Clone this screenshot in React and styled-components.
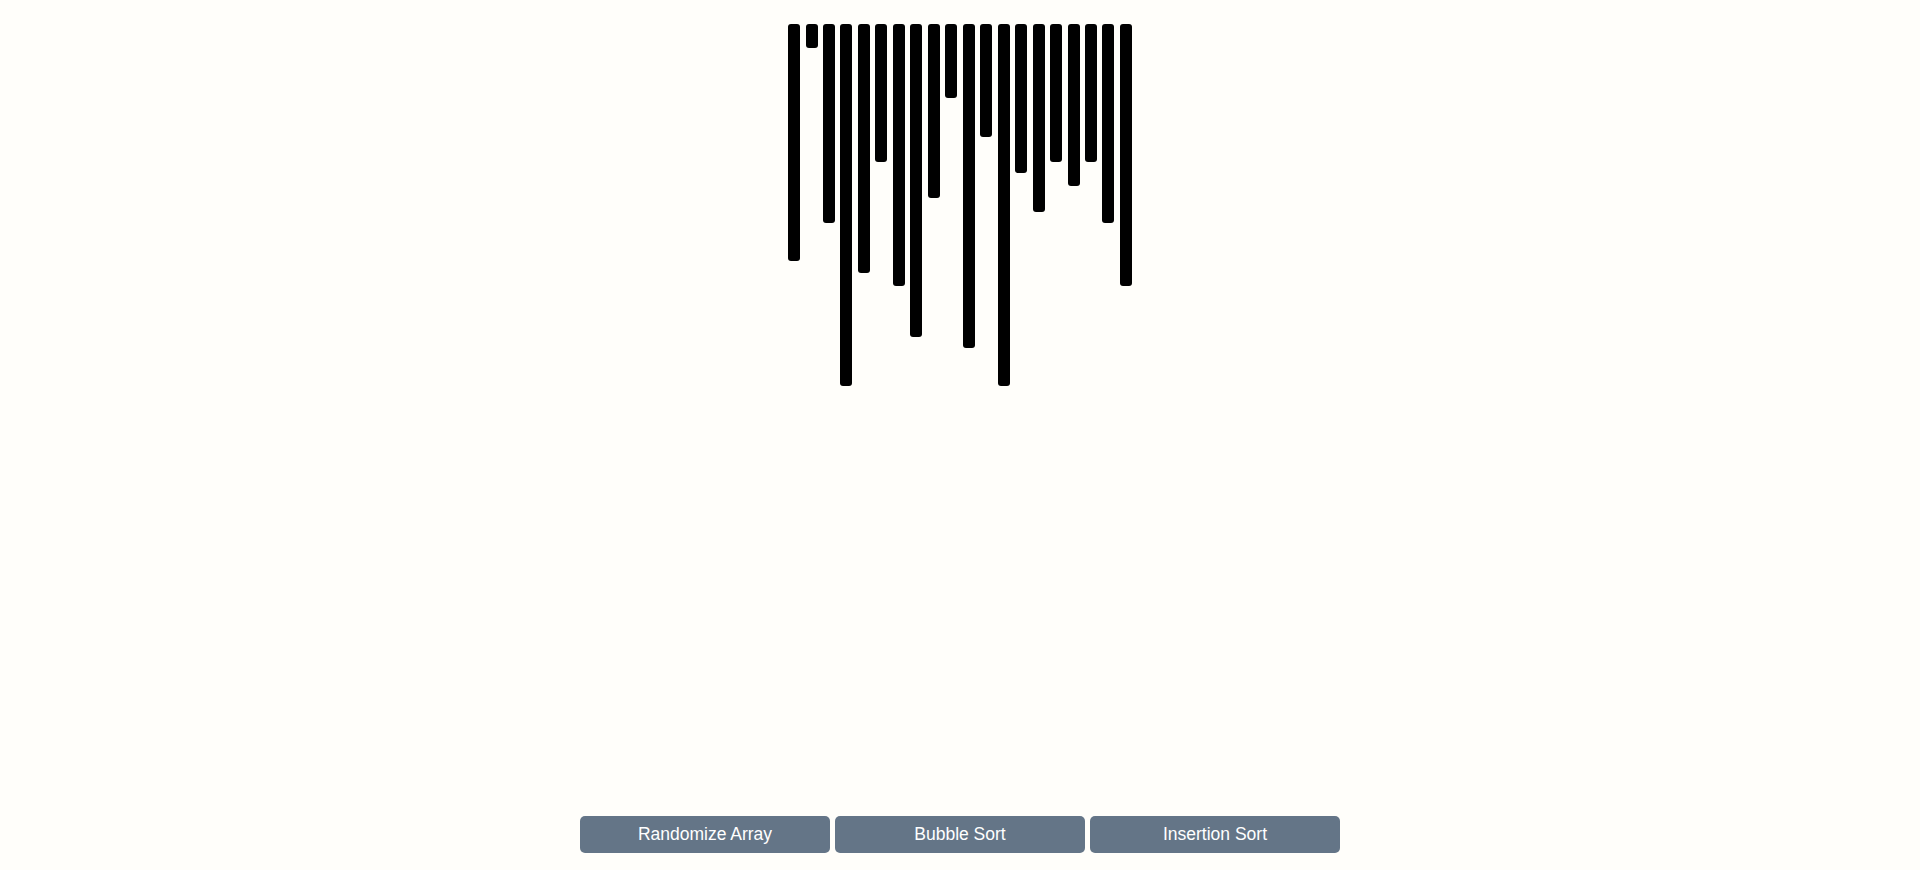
import React from 'react'
import styled, { createGlobalStyle } from 'styled-components'

const GlobalStyle = createGlobalStyle`
  html, body {
    margin: 0;
    padding: 0;
    background-color: #fffefa;
    font-family: "Liberation Sans", Arial, sans-serif;
  }
`

const Page = styled.div`
  height: 100vh;
  display: flex;
  flex-direction: column;
  justify-content: space-between;
  align-items: center;
`

const BarRow = styled.div`
  display: flex;
  align-items: flex-start;
  gap: 5.47px;
  padding-top: 24px;
`

const Bar = styled.div`
  width: 12px;
  height: ${({ h }) => h}px;
  background-color: #000;
  border-radius: 3px;
`

const Controls = styled.div`
  display: flex;
  gap: 5px;
  margin-bottom: 17px;
`

const Button = styled.button`
  width: 250px;
  height: 37px;
  border: none;
  border-radius: 5px;
  background-color: #647587;
  color: #fff;
  font-family: "Liberation Sans", Arial, sans-serif;
  font-size: 17.5px;
  cursor: pointer;
`

const heights = [237, 24, 199, 362, 249, 138, 262, 313, 174, 74, 324, 113, 362, 149, 188, 138, 162, 138, 199, 262]

const App = () => {
  return (
    <Page>
      <GlobalStyle />
      <BarRow>
        {heights.map((h, i) => (
          <Bar key={i} h={h} />
        ))}
      </BarRow>
      <Controls>
        <Button>Randomize Array</Button>
        <Button>Bubble Sort</Button>
        <Button>Insertion Sort</Button>
      </Controls>
    </Page>
  )
}

export default App
